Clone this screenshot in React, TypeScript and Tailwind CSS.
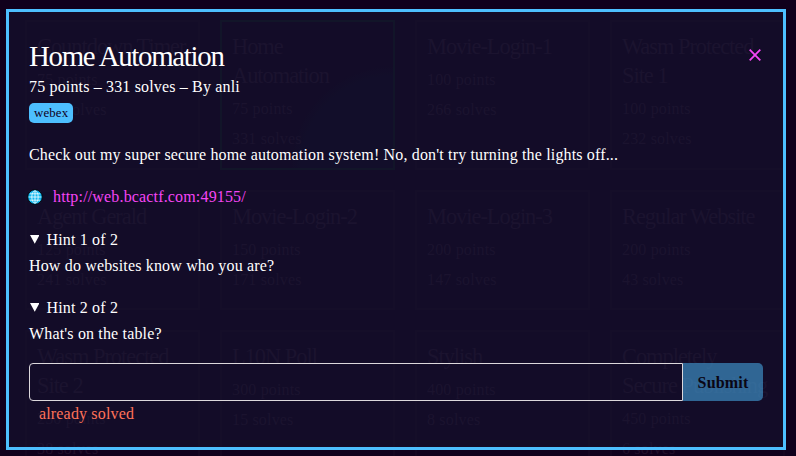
type Challenge = { title: string; points: number; solves: number; solved?: boolean };

const challenges: Challenge[] = [
  { title: "Countdown Timer", points: 75, solves: 387 },
  { title: "Home Automation", points: 75, solves: 331, solved: true },
  { title: "Movie-Login-1", points: 100, solves: 266 },
  { title: "Wasm Protected Site 1", points: 100, solves: 232 },
  { title: "Agent Gerald", points: 125, solves: 241 },
  { title: "Movie-Login-2", points: 150, solves: 171 },
  { title: "Movie-Login-3", points: 200, solves: 147 },
  { title: "Regular Website", points: 200, solves: 43 },
  { title: "Wasm Protected Site 2", points: 250, solves: 38 },
  { title: "L10N Poll", points: 300, solves: 15 },
  { title: "Stylish", points: 400, solves: 8 },
  { title: "Completely Secure Publishing", points: 450, solves: 6 },
];

const hints = ["How do websites know who you are?", "What's on the table?"];

function Card({ title, points, solves, solved }: Challenge) {
  return (
    <div
      className={
        "border-2 pt-[10px] pl-[10px] " +
        (solved
          ? "border-[#0f121e] bg-[radial-gradient(circle_at_100%_100%,#0f0520_0,#0f0520_92px,transparent_104px)] pr-[30px]"
          : "border-[#14041f] pr-[10px]")
      }
    >
      <h3 className="mb-[4px] text-[22.4px] leading-[29px] tracking-[-0.045em]">{title}</h3>
      <p className="leading-[30.4px]">{points} points</p>
      <p className="leading-[30.4px]">{solves} solves</p>
    </div>
  );
}

function Globe() {
  return (
    <svg width="16" height="16" viewBox="0 0 16 16" fill="none">
      <circle cx="8" cy="8" r="7.3" fill="#10b7ef" stroke="#05070d" strokeWidth="1" />
      <g stroke="#e6faff" strokeWidth="0.9">
        <ellipse cx="8" cy="8" rx="3.2" ry="6.2" />
        <path d="M8 1.8v12.4M1.7 8h12.6M2.8 4.8h10.4M2.8 11.2h10.4" />
      </g>
    </svg>
  );
}

export default function App() {
  return (
    <div className="relative h-[456px] w-[796px] overflow-hidden bg-[#10001c] font-['Liberation_Serif',serif] text-[16px] leading-[26px] tracking-[0.01em]">
      <div className="grid w-[805px] grid-cols-[repeat(4,175px)] grid-rows-[150px_120px_150px] gap-5 pt-5 pl-[25px] text-[#200f2a]">
        {challenges.map((c) => (
          <Card key={c.title} {...c} />
        ))}
      </div>

      <div className="absolute top-[9px] left-[6px] h-[441px] w-[780px] border-3 border-[#4dbfff] bg-[#161834]/50 px-5 pt-[25px] text-white">
        <div className="flex items-start justify-between">
          <h2 className="pt-px text-[28.8px] leading-[36px] tracking-[-0.044em]">Home Automation</h2>
          <button aria-label="Close" className="mt-3 mr-[2px]">
            <svg width="12" height="12" viewBox="0 0 12 12" fill="none" stroke="#f545f5" strokeWidth="1.8">
              <path d="M.7.7l10.6 10.6M11.3.7L.7 11.3" />
            </svg>
          </button>
        </div>
        <p>75 points – 331 solves – By anli</p>
        <div className="flex h-[26px] items-center">
          <span className="h-5 rounded-[5px] bg-[#4dbfff] px-[5px] text-[12.8px] leading-5 text-[#10001c]">webex</span>
        </div>

        <p className="mt-4">Check out my super secure home automation system! No, don't try turning the lights off...</p>

        <div className="mt-4 -ml-[2px] flex items-center gap-[10px]">
          <Globe />
          <a className="text-[#f545f5]">http://web.bcactf.com:49155/</a>
        </div>

        <div className="mt-[17px] flex flex-col gap-4">
          {hints.map((hint, i) => (
            <div key={hint}>
              <div className="flex">
                <svg className="mt-2 mr-[7.5px] ml-[0.5px]" width="9.5" height="9" viewBox="0 0 9 9" fill="white" preserveAspectRatio="none">
                  <path d="M0 0h9L4.5 8.8z" />
                </svg>
                <span>
                  Hint {i + 1} of {hints.length}
                </span>
              </div>
              <p>{hint}</p>
            </div>
          ))}
        </div>

        <div className="mt-4 flex h-[38px] w-[734px]">
          <input className="min-w-0 flex-1 rounded-l-[4px] border border-[#dcd8dc] bg-transparent outline-none" />
          <button className="w-20 rounded-r-[5px] bg-[#4dbfff] pt-[2px] font-bold tracking-[0.01em] text-black opacity-50">
            Submit
          </button>
        </div>
        <p className="pl-[10px] text-[#ff7259]">already solved</p>
      </div>
    </div>
  );
}
